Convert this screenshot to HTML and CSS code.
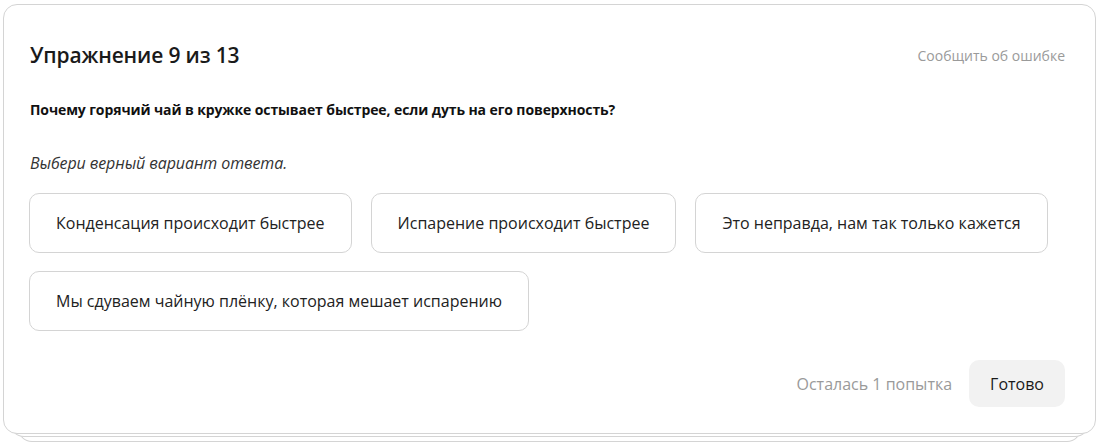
FILE: index.html
```html
<!DOCTYPE html>
<html lang="ru">
<head>
<meta charset="utf-8">
<link rel="stylesheet" href="styles.css">
</head>
<body>
<div class="stack">
  <div class="card">
    <div class="head">
      <h1 class="title">Упражнение 9 из 13</h1>
      <span class="report">Сообщить об ошибке</span>
    </div>
    <p class="question">Почему горячий чай в кружке остывает быстрее, если дуть на его поверхность?</p>
    <p class="hint">Выбери верный вариант ответа.</p>
    <div class="options">
      <button class="opt">Конденсация происходит быстрее</button>
      <button class="opt">Испарение происходит быстрее</button>
      <button class="opt">Это неправда, нам так только кажется</button>
      <button class="opt">Мы сдуваем чайную плёнку, которая мешает испарению</button>
    </div>
    <div class="foot">
      <span class="tries">Осталась 1 попытка</span>
      <button class="done">Готово</button>
    </div>
  </div>
  <div class="under u1"></div>
  <div class="under u2"></div>
</div>
</body>
</html>
```
FILE: styles.css
```css
* { box-sizing: border-box; }
html, body { margin: 0; padding: 0; background: #fff; }
body {
  font-family: "Open Sans", "Noto Sans", sans-serif;
  color: #1a1a1a;
  padding: 4px 3px 0 3px;
  width: 1099px;
  height: 444px;
  overflow: hidden;
}
.stack { display: flex; flex-direction: column; align-items: center; }
.card {
  width: 100%;
  height: 430px;
  border: 1px solid #d4d4d4;
  border-radius: 14px;
  padding: 0 30px 0 25px;
  display: flex;
  flex-direction: column;
  background: #fff;
  position: relative;
  z-index: 2;
}
.under {
  border: 1px solid #d4d4d4;
  border-top: none;
  border-radius: 0 0 14px 14px;
  background: #fff;
  height: 18px;
  margin-top: -15px;
}
.u1 { width: calc(100% - 14px); z-index: 1; }
.u2 { width: calc(100% - 30px); margin-top: -13px; z-index: 0; }
.head {
  display: flex;
  justify-content: space-between;
  align-items: center;
  margin-top: 36px;
  height: 28px;
  padding-left: 1px;
}
.title {
  margin: 0;
  font-size: 21px;
  font-weight: 600;
  color: #1a1a1a;
  letter-spacing: -0.15px;
}
.report {
  font-size: 14px;
  color: #9a9a9a;
}
.question {
  margin: 31px 0 0 1px;
  font-size: 14px;
  font-weight: 700;
  line-height: 20px;
  color: #111;
  letter-spacing: -0.1px;
}
.hint {
  margin: 32px 0 0 1px;
  font-size: 16px;
  font-style: italic;
  line-height: 22px;
  color: #333;
  letter-spacing: -0.1px;
}
.options {
  margin-top: 19px;
  display: flex;
  flex-wrap: wrap;
  gap: 18px 19px;
}
.opt {
  font-family: inherit;
  font-size: 16px;
  color: #222;
  background: #fff;
  border: 1px solid #d4d4d4;
  border-radius: 10px;
  height: 60px;
  padding: 0 26px;
  cursor: pointer;
}
.foot {
  margin-top: 29px;
  display: flex;
  justify-content: flex-end;
  align-items: center;
  gap: 17px;
}
.tries { font-size: 16px; color: #9a9a9a; }
.done {
  font-family: inherit;
  font-size: 16px;
  color: #1a1a1a;
  background: #f2f2f2;
  border: none;
  border-radius: 10px;
  height: 47px;
  padding: 0 21px;
}
```
